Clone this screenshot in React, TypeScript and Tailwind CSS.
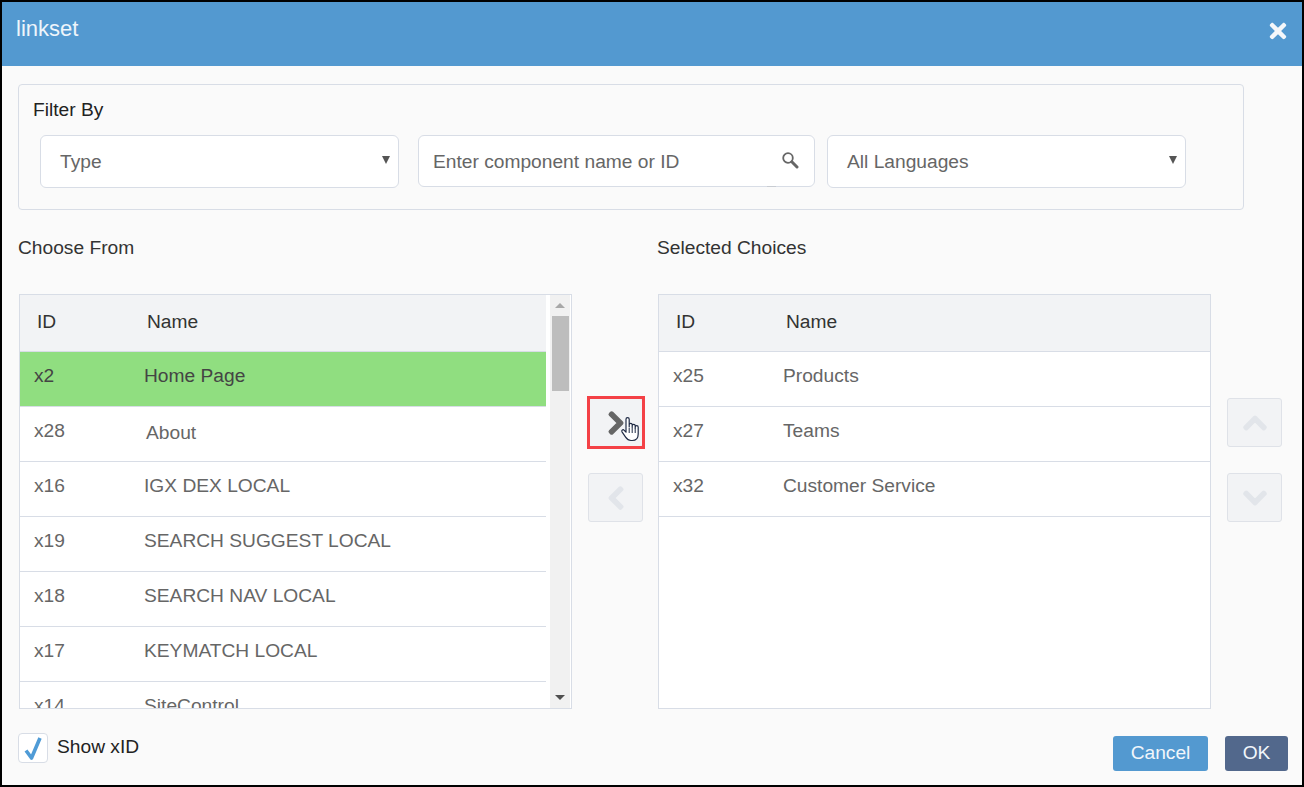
import React from 'react';
import { FaTimes, FaChevronRight, FaChevronLeft, FaChevronUp, FaChevronDown } from 'react-icons/fa';

const leftRows = [
  { id: 'x2', name: 'Home Page' },
  { id: 'x28', name: 'About' },
  { id: 'x16', name: 'IGX DEX LOCAL' },
  { id: 'x19', name: 'SEARCH SUGGEST LOCAL' },
  { id: 'x18', name: 'SEARCH NAV LOCAL' },
  { id: 'x17', name: 'KEYMATCH LOCAL' },
  { id: 'x14', name: 'SiteControl' },
];

const rightRows = [
  { id: 'x25', name: 'Products' },
  { id: 'x27', name: 'Teams' },
  { id: 'x32', name: 'Customer Service' },
];

const TableHead = () => (
  <div className="flex h-[57px] shrink-0 items-center border-b border-[#d8dde6] bg-[#f2f3f5] pb-[2px] pl-[17px] text-[19.2px] text-[#333]">
    <span className="w-[110px]">ID</span>
    <span>Name</span>
  </div>
);

const Row = ({ id, name, selected }: { id: string; name: string; selected?: boolean }) => (
  <div
    className={`flex h-[55px] shrink-0 items-center border-b border-[#d8dde6] pb-[5px] pl-[14px] text-[19.2px] ${
      selected ? 'bg-[#90de80] text-[#444]' : 'text-[#666]'
    }`}
  >
    <span className="w-[110px]">{id}</span>
    <span className={name === 'About' ? 'ml-[2px] mt-[3px]' : ''}>{name}</span>
  </div>
);

const Select = ({ label, width }: { label: string; width: string }) => (
  <div className={`flex h-[53px] items-center justify-between rounded-[6px] border border-[#d8dde6] bg-white pl-[19px] pr-[8px] text-[19.2px] text-[#666] ${width}`}>
    <span className="pt-[2px]">{label}</span>
    <span className="mb-[3px] h-0 w-0 border-x-[4px] border-t-[8px] border-x-transparent border-t-[#555]" />
  </div>
);

const MoveButton = ({ children, active }: { children: React.ReactNode; active?: boolean }) => (
  <div
    className={`flex h-[49px] w-[55px] items-center justify-center rounded-[3px] border border-[#dfe2e8] bg-[#f2f3f5] text-[26px] ${
      active ? 'text-[#666]' : 'text-[#e2e5ea]'
    }`}
  >
    {children}
  </div>
);

// little hand pointer sitting over the active arrow button
const HandCursor = () => (
  <svg className="absolute left-[32px] top-[18px]" width="20" height="26" viewBox="0 0 20 26">
    <path
      d="M6 13V3.200a1.600 1.600 0 0 1 3.200 0V11l0-2.200a1.500 1.500 0 0 1 3 0V11.500l0-1.700a1.500 1.500 0 0 1 3 0V12l0-.8a1.500 1.500 0 0 1 3 0V18c0 4-2.400 6.500-6 6.500H11c-2.600 0-4-1.200-5.400-3.300L2 15.800c-.9-1.500 1-2.800 2.200-1.500L6 16.200z"
      fill="#fff"
      stroke="#1f2a44"
      strokeWidth="1.200"
      strokeLinejoin="round"
    />
    <path d="M9.200 12v5M12.200 12v5M15.200 12v5" stroke="#1f2a44" strokeWidth="1" />
  </svg>
);

export default function App() {
  return (
    <div className="flex h-[787px] w-[1304px] flex-col border-2 border-black bg-[#fafafa] font-['Liberation_Sans',Arial,sans-serif]">
      <div className="flex h-[64px] shrink-0 items-start justify-between bg-[#5399d0] pl-[14px] pr-[12px] text-white">
        <span className="mt-[13px] text-[22px] leading-[28px] text-[#eef5fb]">linkset</span>
        <FaTimes className="mt-[17px] text-[24px] text-[#f4f7fa]" />
      </div>

      <div className="flex flex-1 flex-col pl-[16px]">
        <div className="mt-[18px] h-[126px] w-[1226px] rounded-[4px] border border-[#d8dde6] pl-[14px] pt-[14px]">
          <div className="text-[19.2px] leading-[22px] text-[#222]">Filter By</div>
          <div className="ml-[7px] mt-[14px] flex">
            <Select label="Type" width="w-[359px]" />
            <div className="relative ml-[19px] mr-[12px] flex h-[52px] w-[397px] items-center justify-between rounded-[6px] border border-[#d8dde6] bg-white pl-[14px] pr-[15px] text-[19.2px] text-[#666]">
              <span className="pt-[2px]">Enter component name or ID</span>
              <svg width="18" height="18" viewBox="0 0 18 18" className="mb-[2px]">
                <circle cx="7" cy="7" r="4.800" fill="none" stroke="#666" strokeWidth="1.800" />
                <path d="M10.800 10.800 L16 16" stroke="#666" strokeWidth="3" strokeLinecap="round" />
              </svg>
              <span className="absolute -bottom-px right-[38px] h-px w-[9px] bg-[#c8ccd2]" />
            </div>
            <Select label="All Languages" width="w-[359px]" />
          </div>
        </div>

        <div className="mt-[27px] flex text-[19.2px] leading-[22px] text-[#333]">
          <span className="w-[639px]">Choose From</span>
          <span>Selected Choices</span>
        </div>

        <div className="mt-[35px] flex h-[415px]">
          <div className="ml-px flex h-full w-[553px] overflow-hidden border border-[#d8dde6] bg-white">
            <div className="flex h-full w-[526px] flex-col overflow-hidden">
              <TableHead />
              {leftRows.map((r, i) => (
                <Row key={r.id} id={r.id} name={r.name} selected={i === 0} />
              ))}
            </div>
            <div className="ml-[4px] flex h-full w-[20px] flex-col items-center bg-[#f1f1f1]">
              <span className="mt-[8px] h-0 w-0 border-x-[5px] border-b-[5px] border-x-transparent border-b-[#a8a8a8]" />
              <div className="mt-[8px] h-[75px] w-[17px] bg-[#bdbdbd]" />
              <span className="mb-[8px] mt-auto h-0 w-0 border-x-[5px] border-t-[5px] border-x-transparent border-t-[#505050]" />
            </div>
          </div>

          <div className="ml-[16px] flex w-[55px] flex-col pt-[104px]">
            <div className="relative">
              <MoveButton active>
                <FaChevronRight strokeWidth={30} />
              </MoveButton>
              <div className="absolute -inset-y-[2px] -left-px -right-[2px] border-[3px] border-[#f44146]" />
              <HandCursor />
            </div>
            <div className="mt-[26px]">
              <MoveButton>
                <FaChevronLeft strokeWidth={30} />
              </MoveButton>
            </div>
          </div>

          <div className="ml-[15px] flex h-full w-[553px] flex-col overflow-hidden border border-[#d8dde6] bg-white">
            <TableHead />
            {rightRows.map((r) => (
              <Row key={r.id} id={r.id} name={r.name} />
            ))}
          </div>

          <div className="ml-[16px] flex w-[55px] flex-col pt-[104px]">
            <MoveButton>
              <FaChevronUp strokeWidth={30} />
            </MoveButton>
            <div className="mt-[26px]">
              <MoveButton>
                <FaChevronDown strokeWidth={30} />
              </MoveButton>
            </div>
          </div>
        </div>

        <div className="flex flex-1 items-start justify-between pr-[14px]">
          <div className="mt-[24px] flex items-center">
            <div className="flex h-[30px] w-[30px] items-center justify-center rounded-[4px] border border-[#d8dde6] bg-white">
              <svg width="24" height="26" viewBox="0 0 24 26">
                <path d="M5 15.500 L10.500 23 L19 3" fill="none" stroke="#4f9bd6" strokeWidth="3.600" strokeLinejoin="round" />
              </svg>
            </div>
            <span className="mb-[2px] ml-[9px] text-[19.2px] text-[#222]">Show xID</span>
          </div>
          <div className="mt-[27px] flex">
            <button className="h-[35px] w-[95px] rounded-[3px] bg-[#5399d0] text-[19.2px] text-[#f1f6fb]">Cancel</button>
            <button className="ml-[17px] h-[35px] w-[63px] rounded-[3px] bg-[#52688c] text-[19.2px] text-[#f1f6fb]">OK</button>
          </div>
        </div>
      </div>
    </div>
  );
}
